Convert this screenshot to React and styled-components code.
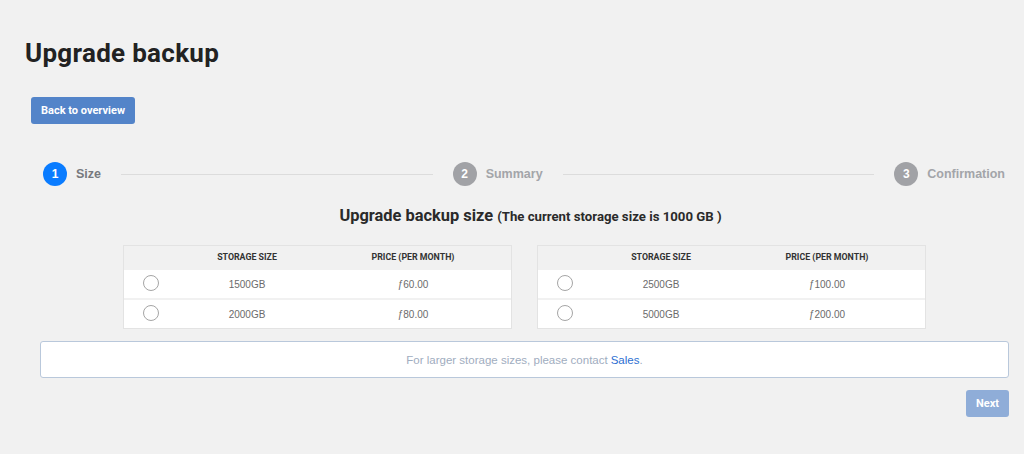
import React from "react";
import styled, { createGlobalStyle } from "styled-components";

const GlobalStyle = createGlobalStyle`
  html, body {
    margin: 0;
    padding: 0;
    background: #f1f1f1;
  }
  body {
    font-family: "Liberation Sans", Arial, sans-serif;
  }
`;

const din = `Roboto, "DejaVu Sans", sans-serif`;

const Page = styled.main`
  width: 1024px;
  height: 454px;
  box-sizing: border-box;
  padding: 36px 15px 0 0;
`;

const Title = styled.h1`
  margin: 0 0 0 25px;
  font-family: ${din};
  font-weight: bold;
  font-size: 26px;
  line-height: 34px;
  color: #222;
  letter-spacing: 0.3px;
`;

const Button = styled.button`
  border: none;
  border-radius: 3px;
  height: 27px;
  padding: 0 ${(p) => p.$pad || 10}px;
  background: ${(p) => (p.$disabled ? "#8fadd8" : "#5384c9")};
  color: #fff;
  font-family: ${din};
  font-weight: bold;
  font-size: 11px;
  cursor: pointer;
`;

const BackRow = styled.div`
  margin: 27px 0 0 31px;
`;

const Content = styled.div`
  margin-left: 40px;
`;

const Stepper = styled.div`
  display: flex;
  align-items: center;
  height: 24px;
  margin-top: 38px;
  padding: 0 4px 0 3px;
`;

const Step = styled.div`
  display: flex;
  align-items: center;
  gap: 9px;
`;

const Circle = styled.span`
  width: 24px;
  height: 24px;
  border-radius: 50%;
  background: ${(p) => (p.$active ? "#0a7cff" : "#a1a2a6")};
  color: #fff;
  display: flex;
  align-items: center;
  justify-content: center;
  font-family: "Liberation Sans", Arial, sans-serif;
  font-weight: bold;
  font-size: 12px;
`;

const StepLabel = styled.span`
  font-family: "Liberation Sans", Arial, sans-serif;
  font-weight: bold;
  font-size: 12.5px;
  color: ${(p) => (p.$active ? "#77797d" : "#a3a5a9")};
`;

const Line = styled.div`
  flex: 1;
  height: 1px;
  background: #dcdcdc;
  margin: 0 20px;
`;

const Subtitle = styled.h2`
  margin: 20px 0 0;
  text-align: center;
  font-family: ${din};
  font-weight: bold;
  font-size: 16.4px;
  line-height: 20px;
  color: #2a2a2a;
  padding-left: 12px;

  small {
    font-size: 13.2px;
  }
`;

const Tables = styled.div`
  display: flex;
  justify-content: center;
  gap: 25px;
  margin-top: 18px;
`;

const Table = styled.div`
  width: 389px;
  display: grid;
  grid-template-columns: 55px 136px 1fr;
  row-gap: 2px;
  background: #f1f1f1;
  border: 1px solid #e3e3e3;
  box-sizing: border-box;
`;

const HeadCell = styled.div`
  height: 22px;
  display: flex;
  align-items: center;
  justify-content: center;
  background: #f1f1f1;
  font-family: ${din};
  font-weight: bold;
  font-size: 8.8px;
  color: #333;
`;

const Cell = styled.div`
  height: 28px;
  display: flex;
  align-items: center;
  justify-content: center;
  background: #fff;
  font-family: "Liberation Sans", Arial, sans-serif;
  font-size: 10px;
  color: #6b6b6b;
`;

const Radio = styled.span`
  width: 14px;
  height: 14px;
  border: 1.5px solid #a5a5a5;
  border-radius: 50%;
  background: #fff;
  margin-top: -3px;
  margin-left: -2px;
`;

const Info = styled.div`
  margin-top: 12px;
  height: 37px;
  box-sizing: border-box;
  border: 1px solid #b9c8db;
  border-radius: 3px;
  background: #fff;
  display: flex;
  align-items: center;
  justify-content: center;
  font-family: "Liberation Sans", Arial, sans-serif;
  font-size: 11.5px;
  color: #9fadc0;

  a {
    color: #2d6fd2;
    text-decoration: none;
    margin-left: 3px;
  }
`;

const Footer = styled.div`
  display: flex;
  justify-content: flex-end;
  margin-top: 12px;
`;

const options = [
  [
    ["1500GB", "60.00"],
    ["2000GB", "80.00"],
  ],
  [
    ["2500GB", "100.00"],
    ["5000GB", "200.00"],
  ],
];

function SizeTable({ rows }) {
  return (
    <Table>
      <HeadCell />
      <HeadCell>STORAGE SIZE</HeadCell>
      <HeadCell>PRICE (PER MONTH)</HeadCell>
      {rows.map(([size, price]) => (
        <React.Fragment key={size}>
          <Cell>
            <Radio />
          </Cell>
          <Cell>{size}</Cell>
          <Cell>ƒ{price}</Cell>
        </React.Fragment>
      ))}
    </Table>
  );
}

export default function App() {
  return (
    <>
      <GlobalStyle />
      <Page>
        <Title>Upgrade backup</Title>
        <BackRow>
          <Button>Back to overview</Button>
        </BackRow>
        <Content>
          <Stepper>
            <Step>
              <Circle $active>1</Circle>
              <StepLabel $active>Size</StepLabel>
            </Step>
            <Line />
            <Step>
              <Circle>2</Circle>
              <StepLabel>Summary</StepLabel>
            </Step>
            <Line />
            <Step>
              <Circle>3</Circle>
              <StepLabel>Confirmation</StepLabel>
            </Step>
          </Stepper>
          <Subtitle>
            Upgrade backup size <small>(The current storage size is 1000 GB )</small>
          </Subtitle>
          <Tables>
            {options.map((rows, i) => (
              <SizeTable key={i} rows={rows} />
            ))}
          </Tables>
          <Info>
            For larger storage sizes, please contact <a href="#">Sales</a>.
          </Info>
          <Footer>
            <Button $disabled $pad={10}>Next</Button>
          </Footer>
        </Content>
      </Page>
    </>
  );
}
